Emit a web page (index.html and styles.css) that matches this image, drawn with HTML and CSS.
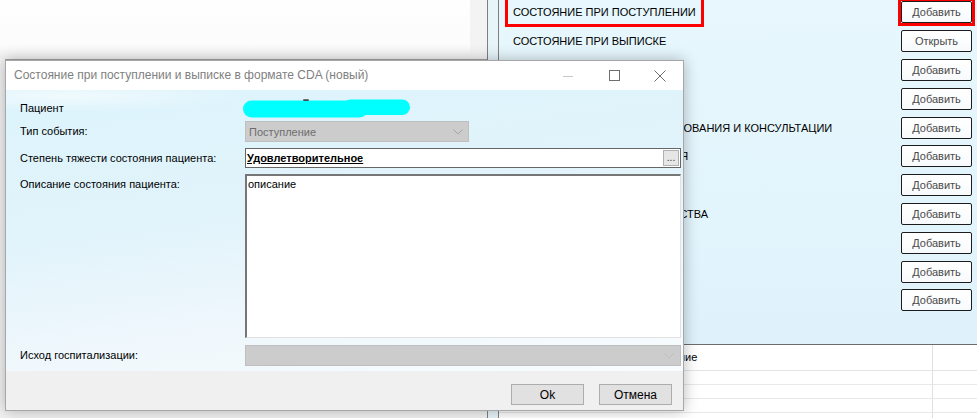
FILE: index.html
```html
<!DOCTYPE html>
<html lang="ru">
<head>
<meta charset="utf-8">
<title>Состояние при поступлении и выписке в формате CDA</title>
<link rel="stylesheet" href="styles.css">
</head>
<body>
<div class="app">
  <div class="left-panel">
    <div class="left-top">
      <div class="left-view"></div>
      <div class="left-scroll"></div>
    </div>
    <div class="left-rule"></div>
    <div class="left-rest"></div>
  </div>
  <div class="splitter"></div>
  <div class="right-panel">
    <div class="sections">
      <div class="section-list">
        <div class="section">
          <span class="section-title is-marked">СОСТОЯНИЕ ПРИ ПОСТУПЛЕНИИ</span>
          <span class="section-action is-marked"><button class="action-btn">Добавить</button></span>
        </div>
        <div class="section">
          <span class="section-title">СОСТОЯНИЕ ПРИ ВЫПИСКЕ</span>
          <span class="section-action"><button class="action-btn">Открыть</button></span>
        </div>
        <div class="section">
          <span class="section-title">ДИАГНОЗЫ</span>
          <span class="section-action"><button class="action-btn">Добавить</button></span>
        </div>
        <div class="section">
          <span class="section-title">АНАМНЕЗ ЗАБОЛЕВАНИЯ</span>
          <span class="section-action"><button class="action-btn">Добавить</button></span>
        </div>
        <div class="section">
          <span class="section-title">ИНСТРУМЕНТАЛЬНЫЕ ИССЛЕДОВАНИЯ И КОНСУЛЬТАЦИИ</span>
          <span class="section-action"><button class="action-btn">Добавить</button></span>
        </div>
        <div class="section">
          <span class="section-title">ЛЕКАРСТВЕННЫЕ НАЗНАЧЕНИЯ</span>
          <span class="section-action"><button class="action-btn">Добавить</button></span>
        </div>
        <div class="section">
          <span class="section-title">ЛЕЧЕНИЕ</span>
          <span class="section-action"><button class="action-btn">Добавить</button></span>
        </div>
        <div class="section">
          <span class="section-title">ХИРУРГИЧЕСКИЕ ВМЕШАТЕЛЬСТВА</span>
          <span class="section-action"><button class="action-btn">Добавить</button></span>
        </div>
        <div class="section">
          <span class="section-title">РЕКОМЕНДАЦИИ</span>
          <span class="section-action"><button class="action-btn">Добавить</button></span>
        </div>
        <div class="section">
          <span class="section-title">ИСХОД</span>
          <span class="section-action"><button class="action-btn">Добавить</button></span>
        </div>
        <div class="section">
          <span class="section-title">ЗАКЛЮЧЕНИЕ</span>
          <span class="section-action"><button class="action-btn">Добавить</button></span>
        </div>
      </div>
    </div>
    <div class="grid">
      <div class="grid-head">
        <div class="cell"></div>
        <div class="cell cell-main">Наименование</div>
        <div class="cell"></div>
      </div>
      <div class="grid-row"><div class="cell"></div><div class="cell cell-main"></div><div class="cell"></div></div>
      <div class="grid-row"><div class="cell"></div><div class="cell cell-main"></div><div class="cell"></div></div>
      <div class="grid-row"><div class="cell"></div><div class="cell cell-main"></div><div class="cell"></div></div>
      <div class="grid-row"><div class="cell"></div><div class="cell cell-main"></div><div class="cell"></div></div>
    </div>
  </div>
</div>

<div class="dialog">
  <div class="dlg-title">
    <div class="dlg-caption">Состояние при поступлении и выписке в формате CDA (новый)</div>
    <div class="dlg-ctrl">
      <svg width="12" height="10" viewBox="0 0 12 10"><path d="M1 5.5 H11" stroke="#c8c8c8" stroke-width="1" fill="none"/></svg>
    </div>
    <div class="dlg-ctrl">
      <svg width="11" height="11" viewBox="0 0 11 11"><rect x="0.5" y="0.5" width="10" height="10" stroke="#6e6e6e" stroke-width="1" fill="none"/></svg>
    </div>
    <div class="dlg-ctrl">
      <svg width="12" height="12" viewBox="0 0 12 12"><path d="M0.5 0.5 L11.5 11.5 M11.5 0.5 L0.5 11.5" stroke="#6e6e6e" stroke-width="1" fill="none"/></svg>
    </div>
  </div>

  <div class="dlg-body">
    <div class="f-label">Пациент</div>
    <div class="f-value">
      <svg class="scribble" width="170" height="20" viewBox="0 0 170 20">
        <rect x="0" y="1.5" width="125" height="17" rx="8.5" fill="#00ffff"/>
        <rect x="100" y="0.5" width="67" height="15.5" rx="7.7" fill="#00ffff"/>
        <rect x="60" y="0.3" width="6" height="1.6" rx="0.8" fill="#4a4a4a"/>
      </svg>
    </div>

    <div class="f-label">Тип события:</div>
    <div class="f-value">
      <div class="combo combo-short">
        <span class="combo-text">Поступление</span>
        <svg class="chev" width="10" height="6" viewBox="0 0 10 6"><path d="M0.5 0.5 L5 5 L9.5 0.5" stroke="#a4a4a4" fill="none"/></svg>
      </div>
    </div>

    <div class="f-label">Степень тяжести состояния пациента:</div>
    <div class="f-value">
      <div class="lookup">
        <span class="lookup-value">Удовлетворительное</span>
        <span class="lookup-btn">...</span>
      </div>
    </div>

    <div class="f-label">Описание состояния пациента:</div>
    <div class="f-value">
      <div class="memo">описание</div>
    </div>

    <div class="f-label">Исход госпитализации:</div>
    <div class="f-value">
      <div class="combo">
        <span class="combo-text"></span>
        <svg class="chev chev-light" width="10" height="6" viewBox="0 0 10 6"><path d="M0.5 0.5 L5 5 L9.5 0.5" stroke="#bdbdbd" fill="none"/></svg>
      </div>
    </div>
  </div>

  <div class="dlg-footer">
    <button class="dlg-btn">Ok</button>
    <button class="dlg-btn">Отмена</button>
  </div>
</div>
</body>
</html>
```

FILE: styles.css
```css
* { box-sizing: border-box; }

html, body { margin: 0; padding: 0; }

body {
  width: 977px;
  height: 418px;
  overflow: hidden;
  position: relative;
  font-family: "Liberation Sans", Arial, sans-serif;
  font-size: 11px;
  color: #000;
  background: #f4f4f4;
}

/* ---------- background application ---------- */
.app {
  display: grid;
  grid-template-columns: 487px 12px 478px;
  height: 418px;
}

.left-panel {
  display: flex;
  flex-direction: column;
  background: #f7f7f7;
}

.left-top {
  height: 59px;
  display: flex;
}

.left-view {
  flex: 1;
  background: linear-gradient(180deg, #fefefe 0%, #fcfcfc 75%, #f1f1f1 100%);
}

.left-scroll {
  width: 17px;
  background: #f3f3f3;
}

.left-rule {
  height: 1px;
  margin-left: 5px;
  background: #a3a3a3;
}

.left-rest {
  flex: 1;
  background: #f2f2f2;
}

.splitter {
  border-left: 1px solid #7f7f7f;
  border-right: 1px solid #7f7f7f;
  background: #e7f5fb;
}

.right-panel {
  display: flex;
  flex-direction: column;
  background: linear-gradient(180deg, #e7f7fd 0%, #e2f4fc 55%, #dcf0fa 100%);
}

.sections {
  height: 344px;
  flex: none;
  overflow: hidden;
}

.section-list {
  margin-top: -2px;
}

.section {
  height: 28.8px;
  display: flex;
  align-items: center;
  padding: 0 2px 0 6px;
}

.section-title {
  border: 3px solid transparent;
  padding: 0 5px;
  line-height: 24px;
  white-space: nowrap;
  font-size: 11px;
  color: #000;
}

.section-action {
  margin-left: auto;
  border: 3px solid transparent;
  display: flex;
}

.is-marked {
  border-color: #ff0000;
}

.action-btn {
  width: 71px;
  height: 22px;
  margin: 0;
  padding: 0;
  border: 1px solid #1c1c1c;
  border-radius: 2px;
  background: linear-gradient(180deg, #ffffff 0%, #f7fafc 100%);
  font-family: "Liberation Sans", Arial, sans-serif;
  font-size: 11px;
  color: #4a4a4a;
}

.grid {
  flex: 1;
  background: #fff;
  border-top: 1px solid #6c6c6c;
}

.grid-head,
.grid-row {
  display: grid;
  grid-template-columns: 118px 316px 1fr;
}

.grid-head {
  height: 26px;
  border-bottom: 1px solid #e4e4e4;
}

.grid-row {
  height: 14px;
  border-bottom: 1px solid #e8e8e8;
}

.cell-main {
  border-right: 1px solid #e0e0e0;
  padding-left: 4px;
  line-height: 25px;
  white-space: nowrap;
  font-size: 11px;
}

/* ---------- dialog window ---------- */
.dialog {
  position: absolute;
  left: 5px;
  top: 60px;
  width: 679px;
  height: 351px;
  border: 1px solid #a7a7a7;
  box-shadow: 0 0 14px rgba(0, 0, 0, 0.28);
  display: flex;
  flex-direction: column;
  background: #f0f0f0;
}

.dlg-title {
  height: 29px;
  flex: none;
  display: flex;
  background: #fff;
}

.dlg-caption {
  flex: 1;
  padding-left: 8px;
  line-height: 29px;
  font-size: 12px;
  color: #7f7f7f;
  white-space: nowrap;
}

.dlg-ctrl {
  width: 46px;
  height: 29px;
  display: flex;
  align-items: center;
  justify-content: center;
}

.dlg-body {
  height: 281px;
  flex: none;
  padding: 8px 2px 0 14px;
  display: grid;
  grid-template-columns: 225px 1fr;
  grid-template-rows: 23px 27px 26px 171px 21px;
  background:
    radial-gradient(ellipse 260px 22px at 60px 6px, rgba(255, 255, 255, 0.55), rgba(255, 255, 255, 0) 70%),
    linear-gradient(172deg, #ddf4fc 0%, #e1f3fb 40%, #eef7fc 70%, #f8fcfe 100%);
}

.f-label {
  padding-top: 3px;
  line-height: 14px;
  white-space: nowrap;
  font-size: 11px;
}

.f-value {
  min-width: 0;
}

.scribble {
  display: block;
  margin: 1px 0 0 -2px;
}

.combo {
  height: 21px;
  display: flex;
  align-items: center;
  background: #cccccc;
  border: 1px solid #bfbfbf;
  padding: 0 5px 0 3px;
}

.combo-short {
  width: 224px;
}

.combo-text {
  flex: 1;
  color: #6d6d6d;
  font-size: 11px;
}

.chev {
  display: block;
}

.chev-light {
  margin-right: 1px;
}

.lookup {
  height: 20px;
  display: flex;
  align-items: center;
  background: #fff;
  border: 1px solid #666;
}

.lookup-value {
  flex: 1;
  padding-left: 1px;
  font-weight: bold;
  text-decoration: underline;
  font-size: 11px;
}

.lookup-btn {
  width: 16px;
  height: 16px;
  margin-right: 1px;
  border: 1px solid #b0b0b0;
  background: #e6e6e6;
  font-size: 10px;
  line-height: 14px;
  text-align: center;
  color: #333;
}

.memo {
  height: 164px;
  background: #fff;
  border-style: solid;
  border-width: 2px 1px 1px 2px;
  border-color: #767676 #e1e1e1 #e1e1e1 #767676;
  padding: 1px 0 0 1px;
  line-height: 14px;
  font-size: 11px;
}

.dlg-footer {
  flex: 1;
  display: flex;
  justify-content: flex-end;
  align-items: flex-start;
  gap: 15px;
  padding: 13px 11px 0 0;
  background: #f0f0f0;
}

.dlg-btn {
  width: 73px;
  height: 21px;
  margin: 0;
  padding: 0;
  border: 1px solid #adadad;
  background: #e1e1e1;
  font-family: "Liberation Sans", Arial, sans-serif;
  font-size: 12px;
  color: #000;
}
```
